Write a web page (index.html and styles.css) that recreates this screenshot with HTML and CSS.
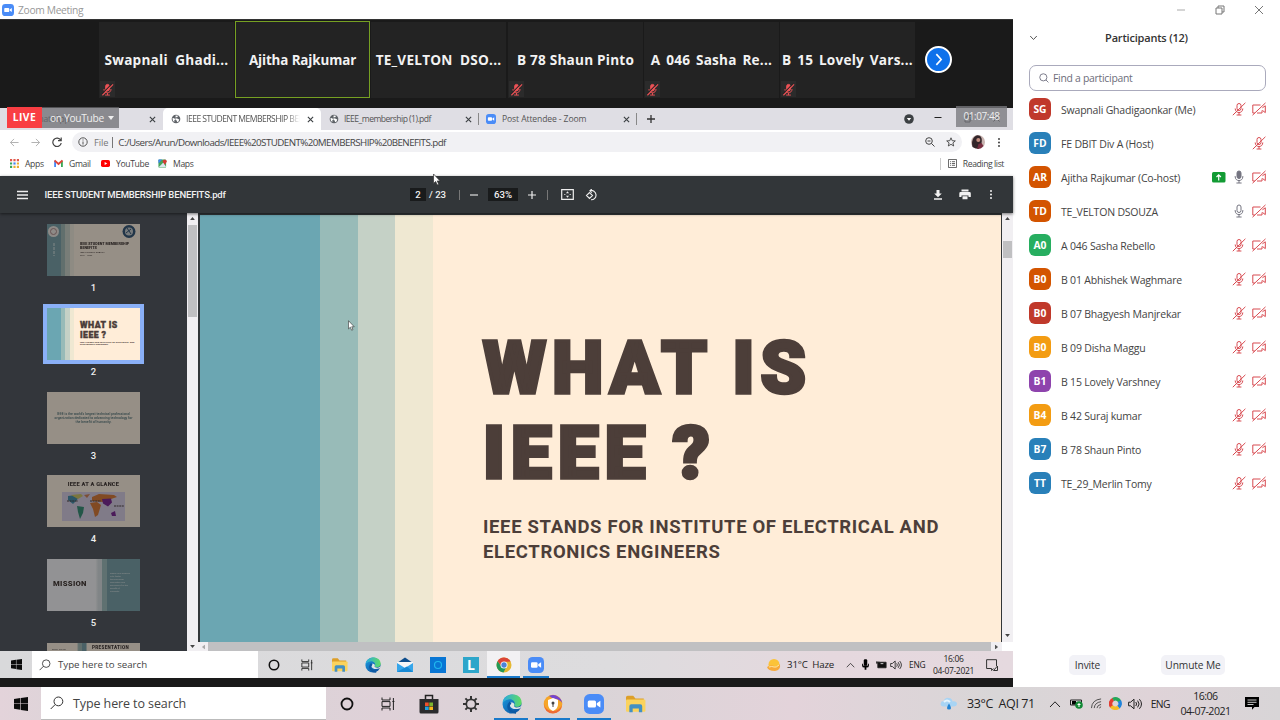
FILE: index.html
```html
<!DOCTYPE html>
<html lang="en">
<head>
<meta charset="utf-8">
<title>Zoom Meeting</title>
<link rel="stylesheet" href="styles.css">
</head>
<body>
<svg class="defs" aria-hidden="true">
  <linearGradient id="edgeBlue" x1="0" y1="0" x2="1" y2="1"><stop offset="0" stop-color="#1b9de2"/><stop offset="1" stop-color="#0c4a9a"/></linearGradient>
  <linearGradient id="edgeGreen" x1="0" y1="0" x2="1" y2="0"><stop offset="0" stop-color="#2ba9e0"/><stop offset="1" stop-color="#5fdc62"/></linearGradient>
  <symbol id="mic-off" viewBox="0 0 14 14"><g fill="none" stroke="#d84a50" stroke-width="1"><rect x="5" y="1.5" width="4" height="7" rx="2"/><path d="M3.2 6.5c0 5.4 7.6 5.4 7.6 0M7 10.6V13M4.6 13h4.8M.8 13.2 13.4.8"/></g></symbol>
  <symbol id="mic-red" viewBox="0 0 14 14"><g fill="none" stroke="#ee5256"><rect x="5" y="1.5" width="4" height="7" rx="2" fill="#ee5256"/><path d="M3.2 6.5c0 5.4 7.6 5.4 7.6 0M7 10.6V13M4.4 13h5.2"/><path stroke="#242424" stroke-width="1.2" d="M1 12 12 .6"/><path stroke-width="1.2" d="M1.5 13.2 13 1.4"/></g></symbol>
  <symbol id="mic-on" viewBox="0 0 14 14"><g fill="none" stroke="#747480"><rect x="5" y="1" width="4" height="7.5" rx="2"/><path d="M3.2 6v.8c0 5 7.6 5 7.6 0V6M7 10.6V13M4.4 13h5.2"/></g></symbol>
  <symbol id="cam-off" viewBox="0 0 14 14"><g fill="none" stroke="#d84a50"><path d="M8.5 3H.8v8h2M5 11h5V8.5M10.4 5.8 13.3 3.8v6.8L10.4 8.4M.5 13.2 13.5.9"/></g></symbol>
  <symbol id="zoom" viewBox="0 0 16 16"><rect width="16" height="16" rx="4.5" fill="#4a8cf7"/><rect x="3" y="5.2" width="6.6" height="5.6" rx="1.2" fill="#fff"/><path d="m10.2 7.3 2.9-2v5.4l-2.9-2z" fill="#fff"/></symbol>
  <symbol id="globe" viewBox="0 0 12 12"><circle cx="6" cy="6" r="5.2" fill="#5f6368"/><path d="M1.8 4.7 4 5.2l1 1.3-1 1v2L2.3 8zM5.5 1.8l3 .4-1 1.6H5.7l-.2 1.4 2 .2 1.4 1 .9-.5-.5 2.7-2 1.2-.4-1.9-1.5-.8" fill="#fff"/></symbol>
  <symbol id="x" viewBox="0 0 8 8"><path d="m1 1 6 6M7 1 1 7" stroke="#3c4043" stroke-width="1.3"/></symbol>
  <symbol id="win" viewBox="0 0 14 14"><path d="m0 2 6.3-.9v5.4H0zm6.9-1L14 0v6.5H6.9zM0 7.1h6.3v5.6L0 11.8zm6.9 0H14V14l-7.1-1.1z" fill="#0b0b0b"/></symbol>
  <symbol id="search" viewBox="0 0 14 14"><circle cx="8.4" cy="5.4" r="4.4" fill="none" stroke="#333"/><path d="M5.2 8.5.7 13" stroke="#333"/></symbol>
  <symbol id="ring" viewBox="0 0 14 14"><circle cx="7" cy="7" r="5.500" fill="none" stroke="#111" stroke-width="1.800"/></symbol>
  <symbol id="tasks" viewBox="0 0 14 14"><path d="M1 .5V3h8V.5M1 13.5V11h8v2.5M1 4.6h8v4.8H1zM12.4 1v12M11.4 4.5h2" fill="none" stroke="#222"/></symbol>
  <symbol id="folder" viewBox="0 0 18 16"><path d="M0 2q0-1.5 1.5-1.5h5L8.5 3H16v4H0z" fill="#dd9f29"/><rect y="4" width="17.5" height="11" rx="1" fill="#fbd35d"/><path d="M3 15.5V10q0-1.8 1.8-1.8h8Q14.6 8.200 14.600 10v5.500h-3V12H6v3.500z" fill="#4390c4"/></symbol>
  <symbol id="edge" viewBox="0 0 20 20"><circle cx="10" cy="10" r="9.5" fill="url(#edgeBlue)"/><path d="M.6 9C1.500-2 19.500-2.500 19.600 8.500c0 5-6.500 5.300-7.600 3.100C14.500 8 10 4.500 6.500 5.500 3.500 6 1 8 .6 9z" fill="url(#edgeGreen)"/><path d="M8.400 8.500c-2 4 1.500 8.500 10 5.700L19.600 11.500c-1.500 2-7 3-7.700.2.900-1.300.6-3.400-3.500-3.200z" fill="#dfe4e5"/><path d="M8.500 8.500C4 13 8 18.500 14 18.400" fill="none" stroke="#0c59a4" stroke-width="2.500"/></symbol>
  <symbol id="up" viewBox="0 0 12 8"><path d="m1 7 5-5.200L11 7" fill="none" stroke="#222"/></symbol>
  <symbol id="vol" viewBox="0 0 14 12"><path d="M.6 4.200h2L6 1.200v9.600L2.600 7.800h-2zM7.800 4q1.600 2 0 4M9.600 2.600q3 3.400 0 6.800M11.400 1.200q4.200 4.800 0 9.600" fill="none" stroke="#222"/></symbol>
  <symbol id="dots" viewBox="0 0 4 14"><g fill="currentColor"><circle cx="2" cy="2.500" r="1.300"/><circle cx="2" cy="7" r="1.300"/><circle cx="2" cy="11.500" r="1.300"/></g></symbol>
  <symbol id="cursor" viewBox="0 0 9 14"><path d="M.6.800v10.600L3 9.200l1.700 3.900 1.700-.8-1.600-3.700H8z" fill="#fff" stroke="#333" stroke-width=".8"/></symbol>
  <symbol id="tri" viewBox="0 0 8 5"><path d="M0 5 4 0l4 5z" fill="currentColor"/></symbol>
</svg>

<header class="titlebar">
  <svg class="i12"><use href="#zoom"/></svg><span>Zoom Meeting</span>
  <div class="winctl">
    <svg viewBox="0 0 10 10"><path d="M1 5h8" stroke="#aaa"/></svg>
    <svg viewBox="0 0 10 10"><path d="M1 3h6v6H1zM3 3V1h6v6H7" fill="none" stroke="#777"/></svg>
    <svg viewBox="0 0 10 10"><path d="m1 1 8 8M9 1 1 9" stroke="#777"/></svg>
  </div>
</header>

<main class="meeting">
  <section class="stage">
    <div class="gallery">
      <div class="tile"><b>Swapnali&nbsp; Ghadi...</b><i><svg><use href="#mic-red"/></svg></i></div>
      <div class="tile active"><b>Ajitha Rajkumar</b></div>
      <div class="tile"><b>TE_VELTON&nbsp; DSO...</b></div>
      <div class="tile fourth"><b>B 78 Shaun Pinto</b><i><svg><use href="#mic-red"/></svg></i></div>
      <div class="tile"><b class="ws">A 046 Sasha Re...</b><i><svg><use href="#mic-red"/></svg></i></div>
      <div class="tile"><b class="ws">B 15 Lovely Vars...</b><i><svg><use href="#mic-red"/></svg></i></div>
      <div class="next"><svg viewBox="0 0 14 14"><path d="m5 2 4.500 5L5 12" fill="none" stroke="#fff" stroke-width="1.500"/></svg></div>
    </div>

    <div class="browser">
      <div class="tabs">
        <div class="tab t1"><span>WhatsApp</span><svg class="x"><use href="#x"/></svg></div>
        <div class="tab current"><svg class="fav"><use href="#globe"/></svg><span class="clip">IEEE STUDENT MEMBERSHIP BENEFITS</span><svg class="x"><use href="#x"/></svg></div>
        <div class="tab t3"><svg class="fav"><use href="#globe"/></svg><span>IEEE_membership (1).pdf</span><svg class="x"><use href="#x"/></svg></div>
        <div class="tab t4"><svg class="fav"><use href="#zoom"/></svg><span>Post Attendee - Zoom</span><svg class="x"><use href="#x"/></svg></div>
        <svg class="plus" viewBox="0 0 10 10"><path d="M5 1v8M1 5h8" stroke="#333" stroke-width="1.300"/></svg>
        <div class="chromectl">
          <svg viewBox="0 0 10 10"><circle cx="5" cy="5" r="4.800" fill="#3c4043"/><path d="M2.800 4h4.400L5 6.800z" fill="#fff"/></svg>
          <svg viewBox="0 0 10 10"><path d="M1.500 3.500h7" stroke="#222"/></svg>
          <svg viewBox="0 0 10 10"><path d="M2 3h5v5H2zM4 3V1.500h4.500V6H7" fill="none" stroke="#222"/></svg>
          <svg viewBox="0 0 10 10"><path d="m1.500 1.500 6 6M7.500 1.500l-6 6" stroke="#222"/></svg>
        </div>
        <div class="live"><b>LIVE</b><span>on YouTube</span><em></em></div>
        <div class="timer">01:07:48</div>
      </div>
      <div class="address">
        <svg class="nav" viewBox="0 0 10 10"><path d="M9.500 5h-9M4.500 1l-4 4 4 4" fill="none" stroke="#aaa"/></svg>
        <svg class="nav" viewBox="0 0 10 10"><path d="M.5 5h9M5.500 1l4 4-4 4" fill="none" stroke="#aaa"/></svg>
        <svg class="nav reload" viewBox="0 0 10 10"><path d="M8.700 3.300A4.200 4.200 0 1 0 9.200 6M9.200.5v3.200H6" fill="none" stroke="#444" stroke-width="1.200"/></svg>
        <div class="url">
          <svg viewBox="0 0 10 10"><circle cx="5" cy="5" r="4.200" fill="none" stroke="#555"/><path d="M5 4.500V7.500M5 2.500v1" stroke="#555"/></svg>
          <span class="file">File</span><span class="path">C:/Users/Arun/Downloads/IEEE%20STUDENT%20MEMBERSHIP%20BENEFITS.pdf</span>
          <svg class="mag" viewBox="0 0 10 10"><circle cx="4" cy="4" r="3.300" fill="none" stroke="#444"/><path d="m6.500 6.500 3 3M2.500 4h3" stroke="#444"/></svg>
          <svg class="star" viewBox="0 0 10 10"><path d="m5 .8 1.200 2.900 3.100.2-2.400 2 .8 3.100L5 7.300 2.300 9l.8-3.100-2.400-2 3.100-.2z" fill="none" stroke="#444" stroke-width=".9"/></svg>
        </div>
        <svg class="photo" viewBox="0 0 14 14"><circle cx="7" cy="7" r="7" fill="#c9b4b0"/><path d="M1.500 12C0 7 2 1 6.500.300c3.500 0 5 3 4 8L8 13.800Q4 14 1.500 12z" fill="#33262a"/><circle cx="7.300" cy="5" r="2" fill="#c48e80"/><path d="m6 14 1.500-5 3-1 2 3-2.500 2.300z" fill="#762d40"/></svg>
        <svg class="more"><use href="#dots"/></svg>
      </div>
      <div class="bookmarks">
        <svg viewBox="0 0 10 10"><g fill="#e0584c"><path d="M0 0h2.400v2.400H0zM3.800 0h2.400v2.400H3.800zM7.600 0H10v2.400H7.600z"/></g><path d="M0 3.800h2.400v2.400H0zM0 7.600h2.400V10H0z" fill="#3ba55b"/><path d="M3.800 3.800h2.400v2.400H3.800z" fill="#4285f4"/><path d="M7.600 3.800H10v2.400H7.600zM3.800 7.600h2.400V10H3.800zM7.600 7.600H10V10H7.600z" fill="#e9ad32"/></svg><span class="b1">Apps</span>
        <svg viewBox="0 0 10 10"><path d="M1.200 9V2" stroke="#4285f4" stroke-width="2"/><path d="M8.800 9V2" stroke="#34a853" stroke-width="2"/><path d="m.6 1.600 4.400 4 4.400-4" fill="none" stroke="#e04438" stroke-width="2"/></svg><span class="b2">Gmail</span>
        <svg viewBox="0 0 10 10"><rect y="1.200" width="10" height="7.600" rx="1.800" fill="#f00"/><path d="m4 3.200 3 1.800-3 1.800z" fill="#fff"/></svg><span class="b3">YouTube</span>
        <svg viewBox="0 0 10 10"><rect x=".5" y=".5" width="8.500" height="9" rx="1" fill="#44a45a"/><path d="m1 9 5-5 3 5z" fill="#dce5ed"/><path d="m.5 5 4-4.500h-4z" fill="#4285f4"/><path d="M7.500 6.500 5.200 3C5 .2 9.800.2 9.800 3z" fill="#d63c35"/></svg><span class="b4">Maps</span>
        <div class="reading"><svg viewBox="0 0 10 10"><path d="M.5.500h9v9h-9zM2.300 3h1M4.300 3h3.500M2.300 5h1M4.300 5h3.500M2.300 7h1M4.300 7h3.500" fill="none" stroke="#555"/></svg><span>Reading list</span></div>
      </div>

      <div class="pdfbar">
        <svg class="menu" viewBox="0 0 12 10"><path d="M0 1.500h11M0 5h11M0 8.500h11" stroke="#eee" stroke-width="1.500"/></svg>
        <b class="doc">IEEE STUDENT MEMBERSHIP BENEFITS.pdf</b>
        <b class="box pg">2</b><b class="of">/ 23</b><i class="sep"></i>
        <svg class="minus" viewBox="0 0 10 10"><path d="M1 5h8" stroke="#eee" stroke-width="1.100"/></svg>
        <b class="box zm">63%</b>
        <svg class="minus" viewBox="0 0 10 10"><path d="M1 5h8M5 1v8" stroke="#eee" stroke-width="1.200"/></svg>
        <i class="sep s2"></i>
        <svg class="fit" viewBox="0 0 13 11"><path d="M.7.700h11.600v9.600H.7z" fill="none" stroke="#eee" stroke-width="1.200"/><path d="M3 5.500h1.500M8.500 5.500H10" stroke="#eee" stroke-width=".7"/><path d="m5 4.300 1.500-2L8 4.300zM5 6.700l1.500 2L8 6.700z" fill="#eee"/></svg>
        <svg class="rot" viewBox="0 0 12 12"><path d="m4.500 3.600 3 2.900-3 2.900-3-2.900zM5 1.600a4.700 4.700 0 1 1 1 9.200M6.800 0 4.900 1.800 6.800 3.600" fill="none" stroke="#eee" stroke-width="1.100"/></svg>
        <svg class="dl" viewBox="0 0 10 10"><path d="M3.500 0h3v3.500h2.300L5 7.300 1.200 3.500h2.300zM1 8.300h8v1.500H1z" fill="#f2f2f2"/></svg>
        <svg class="pr" viewBox="0 0 12 11"><path d="M2.500.5h7v2h-7zM1.500 3h9q1.300 0 1.300 1.400V8H9.500V6.500h-7V8H.3V4.400Q.3 3 1.500 3zM3.500 7.300h5v3h-5z" fill="#f2f2f2"/></svg>
        <svg class="more"><use href="#dots"/></svg>
      </div>

      <div class="viewer">
        <aside class="thumbs">
          <figure><div class="thumb dim"><div class="stripes"></div>
            <svg class="art" viewBox="0 0 93 52"><circle cx="6.500" cy="7.500" r="5.500" fill="#eee5df"/><circle cx="6.500" cy="7.500" r="3" fill="none" stroke="#b88"/><circle cx="82" cy="7.500" r="6.500" fill="#285b8b"/><circle cx="82" cy="7.500" r="4" fill="#c3cbd0"/><path d="m80 4 4 6m0-5-5 4" stroke="#285b8b"/><path d="M7 19v13" stroke="#d5e5e3" stroke-dasharray="3 1"/></svg>
            <p class="tt one">IEEE STUDENT MEMBERSHIP<br>BENEFITS<small>IEEE STUDENT BRANCH<br>2021 - 2022</small></p></div><figcaption>1</figcaption></figure>
          <figure><div class="thumb selected"><div class="stripes"></div><p class="tt two">WHAT IS<br>IEEE ?<small>IEEE STANDS FOR INSTITUTE OF ELECTRICAL AND<br>ELECTRONICS ENGINEERS</small></p></div><figcaption>2</figcaption></figure>
          <figure><div class="thumb dim"><p class="tt three">IEEE is the world's largest technical professional<br>organization dedicated to advancing technology for<br>the benefit of humanity.</p></div><figcaption>3</figcaption></figure>
          <figure><div class="thumb dim"><p class="tt four">IEEE AT A GLANCE</p>
            <svg class="art" viewBox="0 0 93 52"><rect x="15" y="17" width="63" height="29" fill="#d8cbec"/><path d="m21 21 8-1 3 1-2 4-4 4-5-4z" fill="#2a97c2"/><path d="m24 20 10-1 2 2-5 3z" fill="#d5c838"/><path d="m37 20 6-1-3 4z" fill="#ef7b3d"/><path d="m30 31 7 1-1 6-3 6-2-7z" fill="#169b75"/><path d="m45 22 7-3 15 1 3 2-6 2-8 3-11-1z" fill="#ff7410"/><path d="m43 28 7-1 4 3-3 10-3 2-2-8z" fill="#ff7410"/><path d="m55 24 9-.5 1 4-4 4-5-3zM64 38l4-2 1 5h-4z" fill="#9a20c1"/><path d="M20 26h11M43 26h11M67 31h10" stroke="#544" stroke-dasharray="2 .6"/></svg></div><figcaption>4</figcaption></figure>
          <figure><div class="thumb dim mission"><b>MISSION</b><p>IEEE's core purpose<br>is to foster<br>technological<br>innovation and<br>excellence for the<br>benefit of<br>humanity</p></div><figcaption>5</figcaption></figure>
          <figure><div class="thumb dim sixth"><b>PRESENTATION</b><small>Story telling</small></div></figure>
        </aside>
        <div class="vscroll left"><svg><use href="#tri"/></svg><i></i><svg class="down"><use href="#tri"/></svg></div>
        <div class="page">
          <article class="slide"><div class="stripes"></div>
            <h1>WHAT IS<br>IEEE ?</h1>
            <h2>IEEE STANDS FOR INSTITUTE OF ELECTRICAL AND<br>ELECTRONICS ENGINEERS</h2>
          </article>
          <div class="hscroll"><svg class="l"><use href="#tri"/></svg><svg class="r"><use href="#tri"/></svg></div>
        </div>
        <div class="vscroll right"><svg><use href="#tri"/></svg><i></i><svg class="down"><use href="#tri"/></svg></div>
      </div>
      <svg class="ptr p1"><use href="#cursor"/></svg>
      <svg class="ptr p2"><use href="#cursor"/></svg>
    </div>

    <div class="taskbar inner">
      <div class="start"><svg><use href="#win"/></svg></div>
      <div class="find"><svg><use href="#search"/></svg><span>Type here to search</span></div>
      <div class="apps">
        <div><svg><use href="#ring"/></svg></div>
        <div><svg><use href="#tasks"/></svg></div>
        <div><svg class="big"><use href="#folder"/></svg></div>
        <div><svg class="big"><use href="#edge"/></svg></div>
        <div><svg class="big" viewBox="0 0 16 16"><path d="M0 6 8 .500 16 6v8.500H0z" fill="#0d4d8c"/><path d="M0 5h16v4l-8 3-8-3z" fill="#f4f6f8"/><path d="m0 6 8 5 8-5v9H0z" fill="#35a5ea"/><path d="m0 15 10-5.500L16 15z" fill="#1689d5"/></svg></div>
        <div><svg class="big" viewBox="0 0 16 16"><path d="M0 0h16v16H0z" fill="#0876d4"/><circle cx="8" cy="8" r="3.500" fill="none" stroke="#20b8ee" stroke-width="1.200"/></svg></div>
        <div><span class="lapp">L</span></div>
        <div class="on"><svg class="big" viewBox="0 0 16 16"><circle cx="8" cy="8" r="7.500" fill="#e5b832"/><path d="M1.500 4.200A7.500 7.500 0 0 1 14.600 4.500L8 5 5.500 9.500z" fill="#db4437"/><path d="M1.500 4.300A7.500 7.500 0 0 0 7.500 15.500L10.500 9.500 5 9z" fill="#239957"/><circle cx="8" cy="8" r="3.500" fill="#fff"/><circle cx="8" cy="8" r="2.700" fill="#4a83d8"/></svg></div>
        <div class="run"><svg class="big"><use href="#zoom"/></svg></div>
      </div>
      <div class="tray">
        <svg class="sun" viewBox="0 0 14 12"><circle cx="7" cy="5.500" r="5.500" fill="#fbc338"/><path d="M0 8q4-3 7-1t6-2q1 6-5 7Q1 12 0 8z" fill="#f7a93a"/><path d="M2 8q3-1 5 0t5-2" fill="none" stroke="#ffe7a0"/></svg>
        <span>31°C&nbsp; Haze</span>
        <svg class="ch"><use href="#up"/></svg>
        <svg class="mc" viewBox="0 0 8 12"><rect x="2" y="0" width="4" height="7.500" rx="1.500"/><path d="M0 5v2q0 2.500 3 2.500V12h2V9.500q3 0 3-2.500V5H7v2H1V5z"/></svg>
        <svg class="bt" viewBox="0 0 12 8"><path d="M2 1h9v6H2zM0 1h4M1 0v3" fill="#111" stroke="#222"/><path d="M5 2.500h3" stroke="#ddd"/></svg>
        <svg class="vo"><use href="#vol"/></svg>
        <span>ENG</span>
        <time>16:06<br>04-07-2021</time>
        <svg class="nt" viewBox="0 0 12 12"><path d="M10.500 7V.700H.6v8.800h5v2l2-2M11.500 7v4.500h-4z" fill="none" stroke="#333"/></svg>
      </div>
    </div>
  </section>

  <aside class="people">
    <div class="phead"><svg viewBox="0 0 8 6"><path d="m.7 1 3.300 3.500L7.300 1" fill="none" stroke="#555"/></svg><b>Participants (12)</b></div>
    <div class="psearch"><svg viewBox="0 0 12 12"><circle cx="5.200" cy="5.200" r="4.300" fill="none" stroke="#667"/><path d="m8.300 8.300 3 3" stroke="#667"/></svg><span>Find a participant</span></div>
    <ul>
      <li><b class="red">SG</b><span>Swapnali Ghadigaonkar (Me)</span><svg><use href="#mic-off"/></svg><svg><use href="#cam-off"/></svg></li>
      <li><b class="blue">FD</b><span>FE DBIT Div A (Host)</span><svg><use href="#mic-off"/></svg></li>
      <li><b class="orange">AR</b><span>Ajitha Rajkumar (Co-host)</span><svg class="share" viewBox="0 0 14 11"><rect width="13.500" height="10.500" rx="1.500" fill="#129b34"/><path d="M6.700 8.500V3M4.500 5l2.200-2.200L8.900 5" fill="none" stroke="#fff" stroke-width="1.200"/></svg><svg viewBox="0 0 14 14"><g fill="none" stroke="#747480"><rect x="5" y="1" width="4" height="7.500" rx="2" fill="#747480"/><path d="M3.200 6v.8c0 5 7.600 5 7.600 0V6M7 10.600V13M4.400 13h5.200"/></g></svg><svg><use href="#cam-off"/></svg></li>
      <li><b class="orange">TD</b><span>TE_VELTON DSOUZA</span><svg><use href="#mic-on"/></svg><svg><use href="#cam-off"/></svg></li>
      <li><b class="green">A0</b><span>A 046 Sasha Rebello</span><svg><use href="#mic-off"/></svg><svg><use href="#cam-off"/></svg></li>
      <li><b class="orange">B0</b><span>B 01 Abhishek Waghmare</span><svg><use href="#mic-off"/></svg><svg><use href="#cam-off"/></svg></li>
      <li><b class="red">B0</b><span>B 07 Bhagyesh Manjrekar</span><svg><use href="#mic-off"/></svg><svg><use href="#cam-off"/></svg></li>
      <li><b class="amber">B0</b><span>B 09 Disha Maggu</span><svg><use href="#mic-off"/></svg><svg><use href="#cam-off"/></svg></li>
      <li><b class="purple">B1</b><span>B 15 Lovely Varshney</span><svg><use href="#mic-off"/></svg><svg><use href="#cam-off"/></svg></li>
      <li><b class="amber">B4</b><span>B 42 Suraj kumar</span><svg><use href="#mic-off"/></svg><svg><use href="#cam-off"/></svg></li>
      <li><b class="blue">B7</b><span>B 78 Shaun Pinto</span><svg><use href="#mic-off"/></svg><svg><use href="#cam-off"/></svg></li>
      <li><b class="blue">TT</b><span>TE_29_Merlin Tomy</span><svg><use href="#mic-off"/></svg><svg><use href="#cam-off"/></svg></li>
    </ul>
    <footer><button class="inv">Invite</button><button class="unm">Unmute Me</button></footer>
  </aside>
</main>

<div class="taskbar outer">
  <div class="start"><svg><use href="#win"/></svg></div>
  <div class="find"><svg><use href="#search"/></svg><span>Type here to search</span></div>
  <div class="apps">
    <div><svg><use href="#ring"/></svg></div>
    <div><svg><use href="#tasks"/></svg></div>
    <div><svg class="big" viewBox="0 0 20 20"><path d="M6.500 6V1.500h7V6" fill="none" stroke="#222" stroke-width="1.500"/><path d="M.5 5h19v13q0 1.500-1.500 1.500H2Q.5 19.500.5 18z" fill="#2b2b2d"/><path d="M6 8.500h3.700v3.500H6z" fill="#f0512a"/><path d="M10.300 8.500H14v3.500h-3.700z" fill="#7db72f"/><path d="M6 12.600h3.700V16H6z" fill="#22a3df"/><path d="M10.300 12.600H14V16h-3.700z" fill="#f9b81c"/></svg></div>
    <div><svg class="gear" viewBox="0 0 16 16"><circle cx="8" cy="8" r="4.700" fill="none" stroke="#333" stroke-width="1.700"/><path d="M8 0v3M8 13v3M0 8h3M13 8h3M2.400 2.400l2 2M11.600 11.600l2 2M2.400 13.600l2-2M11.600 4.400l2-2" stroke="#333" stroke-width="2"/></svg></div>
    <div class="run"><svg class="big"><use href="#edge"/></svg></div>
    <div class="run"><svg class="big" viewBox="0 0 20 20"><circle cx="10" cy="10" r="9.300" fill="#f6a629"/><path d="M6 2a9.300 9.300 0 0 1 13.200 7Q17 5 10 4.500z" fill="#7544cf"/><path d="M1 9q1 8 9 8 6 0 9-6-1 8-9 8.500Q1 19 1 9z" fill="#ef6a35"/><path d="m10 4 5 2v4q0 5-5 7-5-2-5-7V6z" fill="#fff"/><circle cx="10" cy="9" r="1.500" fill="#444"/><path d="M9.500 9h1v4h-1z" fill="#444"/></svg></div>
    <div class="run"><svg class="big"><use href="#zoom"/></svg></div>
    <div><svg class="big"><use href="#folder"/></svg></div>
  </div>
  <div class="tray">
    <svg class="rain" viewBox="0 0 18 13"><path d="M3.500 9.500Q0 9 .7 6.200 1 4 3.800 4 5 .300 9 .900q3 .300 3.500 3.500Q17 4 17 7.200q-.500 2.600-4 2.300z" fill="#a8d4f4"/><path d="M4 5q3-3 6 0" fill="none" stroke="#e6f4fc" stroke-width="2"/><path d="M9 6.500q4 6 0 6t0-6" fill="#2183d3"/></svg>
    <span>33°C&nbsp; AQI 71</span>
    <svg class="ch"><use href="#up"/></svg>
    <svg class="bt" viewBox="0 0 13 11"><path d="M.5 2h11v5H.5z" fill="none" stroke="#222"/><path d="M2 3h4v3.500H2z"/><circle cx="9" cy="7" r="3.800" fill="#138a36"/><path d="M9 5v4M7.500 6.500h3" stroke="#fff"/></svg>
    <svg class="wf" viewBox="0 0 12 12"><path d="M.5 11Q1 2 11 1M3.500 11Q4 5 11 4M6.500 11Q7 7.500 11 7M9 11l2-1.500" fill="none" stroke="#444"/></svg>
    <svg class="sw" viewBox="0 0 12 12"><g fill="none" stroke-width="3.300"><path d="M2.500 9A4.300 4.300 0 0 1 4 2.200" stroke="#e33d32"/><path d="M3.800 2.300A4.300 4.300 0 0 1 9.800 4" stroke="#24a75a"/><path d="M9.600 3.700A4.300 4.300 0 0 1 8.500 9.500" stroke="#1f83db"/><path d="M8.700 9.400A4.300 4.300 0 0 1 2.300 8.500" stroke="#f5bd28"/></g></svg>
    <svg class="vo"><use href="#vol"/></svg>
    <span>ENG</span>
    <time>16:06<br>04-07-2021</time>
    <svg class="nt" viewBox="0 0 14 13"><path d="M0 0h14v10H9.500L7 12.800V10H0z"/><path d="M2.500 3h9M2.500 5.300h9M2.500 7.500h6" stroke="#ddd" stroke-width=".9"/></svg>
  </div>
</div>
</body>
</html>
```
FILE: styles.css
```css
* { box-sizing: border-box; }
body { margin: 0; width: 1280px; height: 720px; overflow: hidden; display: flex; flex-direction: column; background: #fff; font-family: "Open Sans", "Noto Sans", sans-serif; font-size: 11px; color: #444; white-space: nowrap; }
svg { display: block; flex: none; }
.defs { position: absolute; width: 0; height: 0; }
p, h1, h2, ul, figure { margin: 0; padding: 0; }

.titlebar { height: 19px; flex: none; display: flex; align-items: center; padding-left: 2px; color: #999; font-size: 10.3px; letter-spacing: -.35px; }
.i12 { width: 12px; height: 12px; margin-right: 4px; }
.winctl { margin-left: auto; display: flex; gap: 29px; padding-right: 16px; }
.winctl svg { width: 10px; height: 10px; }

.meeting { display: flex; height: 668px; flex: none; }
.stage { width: 1013px; display: flex; flex-direction: column; background: #1a1a1a; }

.gallery { height: 89px; flex: none; display: flex; align-items: flex-start; gap: 1px; padding: 2px 0 0 99px; border-top: 1px solid #333; }
.tile { width: 135px; height: 76px; background: #232323; display: flex; align-items: center; justify-content: center; position: relative; }
.tile b { color: #f2f2f2; font-size: 13.6px; font-weight: 700; letter-spacing: .22px; padding-bottom: 1px; }
.tile.active b { font-size: 13.4px; letter-spacing: -.12px; padding-bottom: 0; }
.tile .ws { word-spacing: 2px; }
.tile i { position: absolute; left: 1px; bottom: 1px; width: 15px; height: 16px; background: #2b2b2b; padding: 2px 1px; }
.tile i svg { width: 13px; height: 13px; }
.tile.active { border: 1px solid #76a022; height: 77px; margin-top: -1px; }
.tile.fourth { margin-left: 1px; }
.next { width: 27px; height: 27px; border-radius: 50%; background: #0e71eb; border: 2px solid #fff; margin: 24px 0 0 9px; padding: 4px; }
.next svg { width: 15px; height: 15px; }

.browser { height: 543px; flex: none; position: relative; display: flex; flex-direction: column; background: #fff; }
.tabs { height: 22px; flex: none; display: flex; background: #dfdee4; position: relative; font-size: 8.6px; color: #555; }
.tab { display: flex; align-items: center; width: 158px; padding: 0 7px 0 8px; letter-spacing: -.35px; }
.t1 { width: 163px; padding-left: 31px; }
.tab.current { background: #fff; border-radius: 5px 5px 0 0; letter-spacing: -.52px; }
.t4 { padding-left: 7px; letter-spacing: -.4px; }
.t4 span { letter-spacing: -.43px; }
.t3 span { letter-spacing: -.55px; }
.t4 .fav { margin-right: 6px; }
.t4 span { letter-spacing: -.46px; }
.fav { width: 10px; height: 10px; margin-right: 5px; }
.tab .x { width: 7px; height: 7px; margin-left: auto; }
.clip { width: 114px; overflow: hidden; -webkit-mask-image: linear-gradient(90deg, #000 88%, transparent); mask-image: linear-gradient(90deg, #000 88%, transparent); }
.plus { width: 10px; height: 10px; margin: 6px 0 0 9px; }
.t3, .t4 { background: linear-gradient(#888, #888) no-repeat 100% 50% / 1px 12px; }
.t4 span { letter-spacing: -.12px; }
.chromectl { display: flex; align-items: center; margin-left: auto; gap: 19.500px; padding-right: 11px; }
.chromectl svg { width: 10px; height: 10px; }
.live { position: absolute; left: 7px; top: -1px; width: 112px; height: 21px; display: flex; align-items: center; background: rgba(105,105,110,.72); color: #eee; font-size: 10.200px; letter-spacing: -.3px; }
.live b { width: 35px; height: 21px; line-height: 21px; background: #f93e43; color: #fff; text-align: center; font-size: 10.3px; letter-spacing: .4px; }
.live span { margin-left: 8px; }
.live em { position: absolute; right: 5px; top: 9px; border: 3px solid transparent; border-top: 4px solid #eee; border-bottom: 0; }
.timer { position: absolute; left: 956px; top: -2px; width: 51px; height: 21px; line-height: 21px; background: rgba(120,120,125,.78); color: #eee; text-align: center; font-size: 10px; letter-spacing: -.45px; }

.address { height: 24px; flex: none; display: flex; align-items: center; padding-left: 10px; }
.nav { width: 9px; height: 9px; margin-right: 12px; }
.reload { width: 10px; height: 10px; margin-right: 10px; }
.url { width: 890px; height: 20px; border-radius: 10px; background: #f1f1f4; display: flex; align-items: center; padding: 0 6px; }
.url svg { width: 10px; height: 10px; }
.url .file { margin-left: 6px; padding-right: 4px; border-right: 1px solid #777; line-height: 11px; font-size: 9.3px; letter-spacing: -.1px; color: #777; }
.url .path { margin-left: 5px; font-size: 9.8px; letter-spacing: -.58px; }
.url .mag { margin-left: auto; }
.url .star { margin-left: 11px; }
.photo { width: 14px; height: 14px; margin-left: 9px; }
.more { width: 4px; height: 11px; }
.address .more { margin-left: 12px; }

.bookmarks { height: 22px; flex: none; display: flex; align-items: center; padding: 0 0 3px 10px; font-size: 8.6px; letter-spacing: -.35px; }
.bookmarks svg { width: 9px; height: 9px; margin-right: 6px; }
.b1 { width: 29px; } .b2 { width: 32px; } .b3 { width: 42px; }
.reading { margin-left: auto; display: flex; align-items: center; border-left: 1px solid #ccc; padding: 0 9px 0 7px; letter-spacing: -.4px; }

.pdfbar { height: 37px; flex: none; display: flex; align-items: center; background: #323639; color: #f1f1f1; font: 9.6px Roboto, sans-serif; padding: 0 20px 0 17px; box-shadow: 0 1px 3px #0008; position: relative; z-index: 1; }
.pdfbar b { font-weight: 500; }
.menu { width: 12px; height: 10px; }
.doc { width: 365.500px; margin-left: 15.5px; font-size: 9.5px; letter-spacing: -.17px; }
.box { background: #191b1c; height: 13px; line-height: 13px; text-align: center; }
.pg { width: 16px; } .of { margin-left: 3px; width: 30px; }
.sep { width: 1px; height: 10px; background: #777; }
.minus { width: 10px; height: 10px; margin: 0 9px; }
.zm { width: 30px; }
.s2 { margin-left: 1px; }
.fit { width: 13px; height: 11px; margin-left: 13px; }
.rot { width: 12px; height: 12px; margin-left: 11px; }
.dl { width: 10px; height: 10px; margin-left: auto; }
.pr { width: 12px; height: 11px; margin: 0 18.500px 0 15.500px; }

.viewer { height: 438px; flex: none; display: flex; }
.thumbs { width: 187px; height: 438px; overflow: hidden; background: #33363b; padding: 11px 0 0 47px; }
.thumbs figure { width: 93px; height: 83.8px; }
.thumb { width: 93px; height: 52px; background: #ffedd8; position: relative; overflow: hidden; }
.thumb.selected { outline: 4px solid #8ab0f7; }
.dim { filter: brightness(.6) saturate(.65); }
.thumbs figcaption { height: 23px; line-height: 23px; text-align: center; color: #eee; font: 500 9.5px/23px Roboto, sans-serif; }
.stripes { position: absolute; inset: 0; background: linear-gradient(90deg, #6ba6b2 15%, #98bbb8 15% 19.700%, #c5d1c6 19.700% 24.400%, #efe8d2 24.400% 29.100%, #ffedd8 29.100%); }
.art { position: absolute; inset: 0; width: 93px; height: 52px; }
.tt { position: absolute; color: #4b3c38; font-family: Roboto, sans-serif; font-weight: 900; }
.tt small { display: block; font-size: 2.200px; line-height: 2.600px; margin-top: 2px; -webkit-text-stroke: 0; letter-spacing: .08px; }
.one { left: 33px; top: 18px; font-size: 3.700px; line-height: 4.200px; }
.one small { font-weight: 400; }
.two { left: 33px; top: 12px; font-size: 8.700px; line-height: 10px; letter-spacing: .45px; -webkit-text-stroke: .4px #4b3c38; }
.three { width: 93px; top: 20px; color: #4f7e83; font-size: 3.400px; line-height: 4.200px; text-align: center; font-weight: 500; }
.four { width: 93px; top: 5px; text-align: center; font-size: 5.700px; line-height: 8px; letter-spacing: .2px; }
.mission { background: linear-gradient(90deg, #f4f4f8 52%, #d5dfe2 55% 59%, #91bfc1 59% 64%, #6ba6b2 64%); }
.mission b { position: absolute; left: 6px; top: 19px; color: #4b3c38; font: 900 7.700px/11px Roboto, sans-serif; letter-spacing: .3px; }
.mission p { position: absolute; left: 63px; top: 14px; font: 2.300px/2.900px Roboto, sans-serif; color: #d7e5e7; }
.sixth { background: linear-gradient(90deg, #ffedd8 32%, #98bbb8 34% 38%, #6ba6b2 38% 42%, #ffedd8 43%); }
.sixth b { position: absolute; left: 45px; top: 2px; font: 900 4.600px/6px Roboto, sans-serif; color: #4b3c38; letter-spacing: .3px; }
.sixth small { position: absolute; left: 5px; top: 5px; font-size: 2.500px; line-height: 3px; }

.vscroll { width: 11px; background: #f1eff2; display: flex; flex-direction: column; align-items: center; color: #444; }
.vscroll svg { width: 5px; height: 3px; margin: 4px 0 5px; }
.vscroll i { width: 9px; background: #c0c0c2; }
.vscroll .down { transform: rotate(180deg); margin: auto 0 3px; }
.vscroll.left i { height: 92px; }
.vscroll.right { width: 11px; height: 429px; }
.vscroll.right i { height: 17px; margin-top: 16px; }
.vscroll.right .down { margin-bottom: 5px; }
.page { width: 804px; flex: none; background: #323639; padding-top: 2px; }
.slide { width: 801px; height: 427px; margin-left: 2px; position: relative; background: #ffedd8; color: #4c3e39; padding: 110.500px 0 0 283px; font-family: Roboto, sans-serif; overflow: hidden; }
h1, h2 { position: relative; }
h1 { font-size: 72.500px; font-weight: 900; line-height: 85.500px; letter-spacing: 6.200px; word-spacing: -3px; -webkit-text-stroke: 3.600px #4c3e39; }
h2 { margin-top: 18.500px; font-size: 18.500px; font-weight: 700; line-height: 24.500px; letter-spacing: .65px; }
.hscroll { height: 9px; background: linear-gradient(90deg, #f1eff2 10px, #c0c0c2 10px 793px, #f1eff2 793px); display: flex; align-items: center; justify-content: space-between; color: #555; padding: 0 3px; }
.hscroll svg { width: 5px; height: 4px; }
.hscroll .l { transform: rotate(-90deg); color: #aaa; }
.hscroll .r { transform: rotate(90deg); }
.ptr { position: absolute; z-index: 2; width: 8px; height: 13px; }
.p1 { left: 433px; top: 65px; }
.p2 { left: 348px; top: 212px; width: 7px; height: 11px; }

.taskbar { display: flex; color: #222; flex: none; }
.taskbar .start { display: flex; align-items: center; justify-content: center; }
.find { background: #fff; display: flex; align-items: center; color: #444; }
.apps { display: flex; }
.apps div { display: flex; align-items: center; justify-content: center; position: relative; }
.run::after, .on::after { content: ""; position: absolute; left: 3px; right: 4px; bottom: 0; height: 2px; background: #1979ca; }
.tray { margin-left: auto; flex: none; display: flex; align-items: center; }
.tray time { text-align: center; }

.inner { height: 27px; background: linear-gradient(90deg, #d9d9db, #dddcde 60%, #e5d8de 82%, #e5d9df); font-size: 9.700px; }
.inner .start { width: 32px; }
.inner .start svg { width: 11px; height: 11px; }
.inner .find { width: 226px; padding-left: 7px; }
.inner .find svg { width: 12px; height: 12px; margin-right: 7px; }
.inner .apps div { width: 32.750px; }
.inner .apps svg { width: 12px; height: 12px; }
.inner .apps svg.big { width: 16px; height: 16px; }
.lapp { width: 16px; height: 16px; background: #2da6ca; color: #fff; font: 700 14px/16px "Open Sans", sans-serif; text-align: center; }
.inner .on { background: #f2f1f3; }
.inner .on::after { left: 0; right: 0; }
.inner .tray { padding-right: 15px; letter-spacing: -.2px; }
.sun { width: 14px; height: 12px; margin-right: 6px; }
.inner .ch { width: 9px; height: 6px; margin: 0 7px 0 12px; }
.mc { width: 7px; height: 11px; }
.inner .bt { width: 11px; height: 8px; margin: 0 3px 0 7px; }
.inner .vo { width: 12px; height: 10px; margin-right: 7px; }
.inner .tray span:nth-of-type(2) { font-size: 8.400px; }
.inner time { font-size: 8.500px; line-height: 12px; margin: 0 12px 0 7.500px; letter-spacing: -.33px; }
.inner .nt { width: 12px; height: 12px; }

.outer { height: 33px; background: linear-gradient(90deg, #e3d3da, #d8d5d7 10%, #dfd1d8 30%, #d9d4d7 45%, #e3d3da 62%, #d8d6d7 78%, #dfd3d8 90%, #d8d5d7); font-size: 12.500px; }
.outer .start { width: 41px; }
.outer .start svg { width: 14px; height: 14px; }
.outer .find { width: 285px; padding-left: 9px; border-bottom: 1px solid #bbb; letter-spacing: -.1px; }
.outer .find svg { width: 14px; height: 14px; margin-right: 9px; }
.outer .apps div { width: 41.300px; }
.outer .apps svg { width: 14px; height: 14px; }
.outer .apps svg.big { width: 20px; height: 20px; }
.outer .apps svg.gear { width: 16px; height: 16px; }
.outer .tray { padding-right: 21px; letter-spacing: -.42px; }
.rain { width: 18px; height: 13px; margin-right: 9px; }
.outer .ch { width: 12px; height: 8px; margin: 0 9px 0 14px; }
.outer .bt { width: 13px; height: 11px; }
.wf { width: 11px; height: 11px; margin: 0 7px 0 8px; }
.sw { width: 13px; height: 13px; }
.outer .vo { width: 14px; height: 12px; margin: 0 9px 0 6px; }
.outer .tray span:nth-of-type(2) { font-size: 10.300px; letter-spacing: -.6px; }
.outer time { font-size: 10.600px; line-height: 15px; margin: 0 14.500px 0 10.500px; letter-spacing: -.52px; }
.outer .nt { width: 14px; height: 13px; }

.people { width: 267px; display: flex; flex-direction: column; }
.phead { height: 46px; display: flex; align-items: center; padding: 0 0 8px 16px; color: #333; }
.phead svg { width: 9px; height: 6px; }
.phead b { flex: 1; margin-right: 25px; text-align: center; font-size: 11px; font-weight: 600; letter-spacing: -.2px; padding-bottom: 1px; }
.psearch { width: 237px; height: 26px; margin-left: 16px; border: 1px solid #aaaabc; border-radius: 7px; display: flex; align-items: center; padding: 0 0 1px 9px; gap: 4px; color: #6d6d7a; font-size: 10.400px; letter-spacing: -.27px; }
.psearch svg { width: 10px; height: 10px; }
.people ul { list-style: none; margin-top: 1px; }
.people li { height: 34px; display: flex; align-items: center; padding: 0 14px 0 16px; gap: 6px; }
.people li b { width: 22px; height: 22px; border-radius: 6px; color: #fff; text-align: center; font: 700 10.300px/22px "Open Sans", sans-serif; margin-right: 4px; }
.people li span { flex: 1; font-size: 10.500px; letter-spacing: -.2px; padding-top: 2px; }
.people li svg { width: 14px; height: 14px; }
.people li svg.share { height: 11px; }
.red { background: #c0392b; } .blue { background: #2980b9; } .orange { background: #d35400; } .green { background: #27ae60; } .amber { background: #f39c12; } .purple { background: #8e44ad; }
.people footer { margin-top: auto; height: 32px; display: flex; padding-left: 56px; gap: 55px; }
.people button { border: 0; border-radius: 5px; background: #f2f2f7; height: 20px; color: #333; font: 10.200px "Open Sans", sans-serif; letter-spacing: -.1px; padding: 0; }
.inv { width: 37px; } .unm { width: 64px; }
```
